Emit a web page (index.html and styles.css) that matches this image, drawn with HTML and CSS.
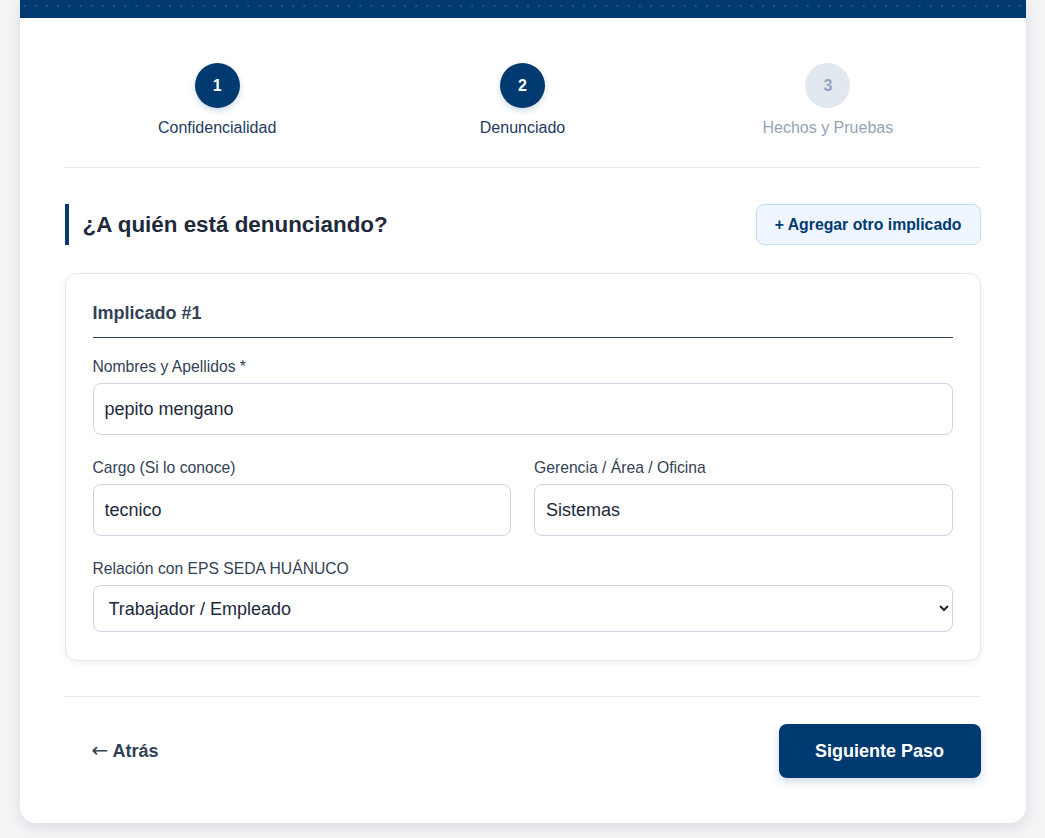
FILE: index.html
```html
<!DOCTYPE html>
<html lang="es">
<head>
  <meta charset="UTF-8" />
  <meta name="viewport" content="width=device-width, initial-scale=1.0"/>
  <title>Denuncia - Paso 2</title>
  <link rel="stylesheet" href="styles.css">
</head>
<body>
  <div class="container">
    <div class="top-bar"></div>

    <div class="content">
      <div class="steps">
        <div class="step done">
          <div class="step-circle">1</div>
          <div class="step-label">Confidencialidad</div>
        </div>
        <div class="step done">
          <div class="step-circle">2</div>
          <div class="step-label">Denunciado</div>
        </div>
        <div class="step">
          <div class="step-circle">3</div>
          <div class="step-label">Hechos y Pruebas</div>
        </div>
      </div>

      <div class="section-head">
        <h2>¿A quién está denunciando?</h2>
        <button type="button" class="btn-add">+ Agregar otro implicado</button>
      </div>

      <div class="card">
        <h3>Implicado #1</h3>

        <div class="field">
          <label for="nombres">Nombres y Apellidos *</label>
          <input type="text" id="nombres" value="pepito mengano" />
        </div>

        <div class="field-row">
          <div class="field">
            <label for="cargo">Cargo (Si lo conoce)</label>
            <input type="text" id="cargo" value="tecnico" />
          </div>
          <div class="field">
            <label for="area">Gerencia / Área / Oficina</label>
            <input type="text" id="area" value="Sistemas" />
          </div>
        </div>

        <div class="field last">
          <label for="relacion">Relación con EPS SEDA HUÁNUCO</label>
          <select id="relacion">
            <option>Trabajador / Empleado</option>
            <option>Proveedor</option>
            <option>Otro</option>
          </select>
        </div>
      </div>

      <div class="footer">
        <button type="button" class="btn-back"><span class="arrow">&larr;</span> Atrás</button>
        <button type="button" class="btn-next">Siguiente Paso</button>
      </div>
    </div>
  </div>
</body>
</html>
```

FILE: styles.css
```css
body {
  font-family: "Liberation Sans", Arial, sans-serif;
  background-color: #f3f4f6;
  color: #1e293b;
  margin: 0;
  padding: 0 0 15px;
}

.container {
  width: 1006px;
  margin: 0 auto;
  background-color: #ffffff;
  border-radius: 0 0 16px 16px;
  box-shadow: 0 4px 14px rgba(15, 23, 42, 0.1);
  overflow: hidden;
}

.top-bar {
  height: 18px;
  background-color: #003a70;
  background-image: radial-gradient(circle at 50% 6px, rgba(255, 255, 255, 0.14) 0.8px, transparent 1.5px);
  background-size: 11.2px 18px;
  background-position: -1px 0;
}

.content {
  padding: 45px 45px 45px;
}

/* steps */
.steps {
  display: grid;
  grid-template-columns: 1fr 1fr 1fr;
  padding-bottom: 30px;
  border-bottom: 1px solid #e2e8f0;
}
.step {
  display: flex;
  flex-direction: column;
  align-items: center;
}
.step-circle {
  width: 45px;
  height: 45px;
  border-radius: 50%;
  background-color: #e2e8f0;
  color: #94a3b8;
  font-weight: bold;
  font-size: 16px;
  display: flex;
  align-items: center;
  justify-content: center;
}
.step-label {
  margin-top: 11px;
  font-size: 16px;
  line-height: 18px;
  color: #94a3b8;
}
.step.done .step-circle {
  background-color: #003a70;
  color: #ffffff;
  box-shadow: 0 3px 6px rgba(0, 58, 112, 0.18);
}
.step.done .step-label {
  color: #1e3a5f;
}

/* section header */
.section-head {
  display: flex;
  justify-content: space-between;
  align-items: center;
  margin-top: 36px;
}
.section-head h2 {
  margin: 0;
  font-size: 22.4px;
  line-height: 41px;
  color: #1e293b;
  border-left: 4px solid #003a70;
  padding-left: 14px;
}
.btn-add {
  font-family: inherit;
  height: 41px;
  padding: 0 18px;
  background-color: #eff6ff;
  border: 1px solid #bfdbfe;
  border-radius: 8px;
  color: #003a70;
  font-weight: bold;
  font-size: 15.8px;
  cursor: pointer;
}

/* card */
.card {
  margin-top: 28px;
  border: 1px solid #e2e8f0;
  border-radius: 12px;
  padding: 27px 27px 28px;
  box-shadow: 0 2px 6px rgba(15, 23, 42, 0.07);
}
.card h3 {
  margin: 0 0 20px;
  font-size: 18px;
  line-height: 24px;
  padding-bottom: 12px;
  border-bottom: 1px solid #334155;
  color: #334155;
}

.field {
  display: flex;
  flex-direction: column;
  margin-bottom: 24px;
}
.field.last {
  margin-bottom: 0;
}
.field label {
  font-size: 15.7px;
  line-height: 18px;
  color: #334155;
  margin-bottom: 7px;
}
.field input,
.field select {
  font-family: inherit;
  font-size: 18px;
  color: #1e293b;
  border: 1px solid #cbd5e1;
  border-radius: 8px;
  background-color: #ffffff;
  padding: 0 11px;
  height: 52px;
  box-sizing: border-box;
}
.field select {
  height: 47px;
}
.field input:focus,
.field select:focus {
  outline: none;
  border-color: #003a70;
}

.field-row {
  display: grid;
  grid-template-columns: 1fr 1fr;
  gap: 23px;
}

/* footer */
.footer {
  display: flex;
  justify-content: space-between;
  align-items: center;
  margin-top: 35px;
  padding-top: 27px;
  border-top: 1px solid #e2e8f0;
}
.btn-back {
  font-family: inherit;
  background: none;
  border: none;
  padding: 10px 27px;
  font-size: 18px;
  font-weight: bold;
  color: #334155;
  cursor: pointer;
}
.btn-back .arrow {
  font-family: "DejaVu Sans", sans-serif;
  font-weight: normal;
  font-size: 20px;
  line-height: 18px;
}
.btn-next {
  font-family: inherit;
  width: 202px;
  height: 54px;
  background-color: #003a70;
  color: #ffffff;
  border: none;
  border-radius: 8px;
  font-size: 18px;
  font-weight: bold;
  cursor: pointer;
  box-shadow: 0 4px 8px rgba(0, 58, 112, 0.18);
}
```
